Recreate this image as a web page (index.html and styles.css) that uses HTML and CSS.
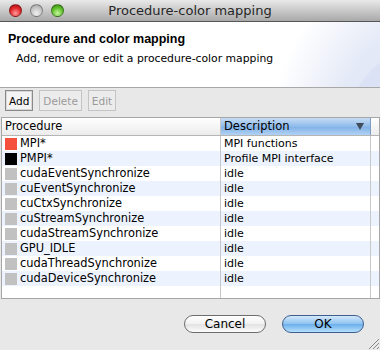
FILE: index.html
```html
<!DOCTYPE html>
<html lang="en">
<head>
  <meta charset="UTF-8">
  <title>Procedure-color mapping</title>
  <link rel="stylesheet" href="styles.css">
</head>
<body>
  <div class="window">
    <header class="titlebar">
      <div class="lights">
        <span class="light red"></span>
        <span class="light gray"></span>
        <span class="light green"></span>
      </div>
      <div class="title">Procedure-color mapping</div>
    </header>

    <section class="banner">
      <h1>Procedure and color mapping</h1>
      <p>Add, remove or edit a procedure-color mapping</p>
    </section>

    <div class="toolbar">
      <button class="tool-btn focus">Add</button>
      <button class="tool-btn" disabled>Delete</button>
      <button class="tool-btn" disabled>Edit</button>
    </div>

    <div class="table">
      <div class="row head">
        <div class="cell proc">Procedure</div>
        <div class="cell desc sorted">Description <span class="arrow"></span></div>
        <div class="cell filler"></div>
      </div>
      <div class="row"><div class="cell proc"><i class="swatch" style="background:#f5503b"></i>MPI*</div><div class="cell desc">MPI functions</div><div class="cell filler"></div></div>
      <div class="row"><div class="cell proc"><i class="swatch" style="background:#000"></i>PMPI*</div><div class="cell desc">Profile MPI interface</div><div class="cell filler"></div></div>
      <div class="row"><div class="cell proc"><i class="swatch"></i>cudaEventSynchronize</div><div class="cell desc">idle</div><div class="cell filler"></div></div>
      <div class="row"><div class="cell proc"><i class="swatch"></i>cuEventSynchronize</div><div class="cell desc">idle</div><div class="cell filler"></div></div>
      <div class="row"><div class="cell proc"><i class="swatch"></i>cuCtxSynchronize</div><div class="cell desc">idle</div><div class="cell filler"></div></div>
      <div class="row"><div class="cell proc"><i class="swatch"></i>cuStreamSynchronize</div><div class="cell desc">idle</div><div class="cell filler"></div></div>
      <div class="row"><div class="cell proc"><i class="swatch"></i>cudaStreamSynchronize</div><div class="cell desc">idle</div><div class="cell filler"></div></div>
      <div class="row"><div class="cell proc"><i class="swatch"></i>GPU_IDLE</div><div class="cell desc">idle</div><div class="cell filler"></div></div>
      <div class="row"><div class="cell proc"><i class="swatch"></i>cudaThreadSynchronize</div><div class="cell desc">idle</div><div class="cell filler"></div></div>
      <div class="row"><div class="cell proc"><i class="swatch"></i>cudaDeviceSynchronize</div><div class="cell desc">idle</div><div class="cell filler"></div></div>
      <div class="row empty"><div class="cell proc"></div><div class="cell desc"></div><div class="cell filler"></div></div>
    </div>

    <footer class="actions">
      <button class="pill">Cancel</button>
      <button class="pill default">OK</button>
      <svg class="grip" width="11" height="11" viewBox="0 0 11 11">
        <path d="M1 11 L11 1 M5 11 L11 5 M9 11 L11 9" stroke="#8a8a8a" stroke-width="1"/>
      </svg>
    </footer>
  </div>
</body>
</html>
```

FILE: styles.css
```css
* {
  margin: 0;
  padding: 0;
  box-sizing: border-box;
}

body {
  font-family: 'DejaVu Sans', 'Liberation Sans', sans-serif;
  font-size: 11px;
  color: #000;
  background: #e8e8e8;
}

.window {
  width: 380px;
  height: 350px;
  display: flex;
  flex-direction: column;
  position: relative;
}

/* Title bar */
.titlebar {
  height: 22px;
  display: flex;
  align-items: center;
  background: linear-gradient(#e9e9e9, #a9a9a9);
  border-bottom: 1px solid #565656;
  position: relative;
}

.lights {
  display: flex;
  gap: 8px;
  padding-left: 9px;
}

.light {
  width: 13px;
  height: 13px;
  border-radius: 50%;
  border: 1px solid rgba(0,0,0,0.35);
}

.light.red { background: radial-gradient(circle at 50% 75%, #ff9a9a, #e0262a 55%, #a30d10); }
.light.gray { background: radial-gradient(circle at 50% 75%, #f0f0f0, #c6c6c6 55%, #9c9c9c); }
.light.green { background: radial-gradient(circle at 50% 75%, #c6f7a0, #5fbf2a 55%, #2f7d10); }

.title {
  position: absolute;
  left: 0;
  right: 0;
  text-align: center;
  font-size: 13px;
  color: #262626;
}

/* Banner */
.banner {
  height: 66px;
  padding: 9px 8px 0;
  background:
    radial-gradient(ellipse 130px 170px at 420px 130px, #dbe2f5 60%, rgba(219,226,245,0) 62%),
    radial-gradient(ellipse 160px 190px at 430px 120px, #e4e9f7 60%, rgba(255,255,255,0) 100%),
    #fff;
  border-bottom: 1px solid #a8a8a8;
}

.banner h1 {
  font-family: 'Liberation Sans', sans-serif;
  font-size: 12.5px;
  font-weight: bold;
  line-height: 16px;
}

.banner p {
  margin-top: 5px;
  padding-left: 8px;
  line-height: 14px;
  font-size: 10.8px;
}

/* Toolbar */
.toolbar {
  display: flex;
  gap: 6px;
  padding: 2px 4px 6px 5px;
}

.tool-btn {
  font-family: inherit;
  font-size: 10.5px;
  height: 21px;
  padding: 0 3px;
  background: #ececec;
  border: 1px solid #c4c4c4;
  color: #9a9a9a;
}

.tool-btn.focus {
  color: #000;
  background: #f4f4f4;
  border: 1px solid #8a8a8a;
  box-shadow: inset 0 0 0 1px #d8d8d8;
}

/* Table */
.table {
  margin-left: 1px;
  height: 182px;
  border: 1px solid #a6a6a6;
  background: #fff;
  display: flex;
  flex-direction: column;
}

.row {
  display: flex;
  height: 15px;
  line-height: 15px;
}

.row:nth-child(odd) {
  background: #edf3fe;
}

.row.empty {
  flex: 1;
  background: #fff;
}

.row.head {
  height: 18px;
  line-height: 17px;
  background: linear-gradient(#fff, #ececec);
  border-bottom: 1px solid #b5b5b5;
  font-size: 11.5px;
}

.cell {
  white-space: nowrap;
  overflow: hidden;
}

.proc {
  width: 219px;
  padding-left: 3px;
  display: flex;
  align-items: center;
  border-right: 1px solid #c8c8c8;
  font-size: 11.4px;
}

.desc {
  width: 150px;
  padding-left: 3px;
  border-right: 1px solid #c8c8c8;
}

.filler {
  flex: 1;
}

.head .sorted {
  background: linear-gradient(#c6dcf5, #8fbbea 50%, #7fb0e6 51%, #b1d2f4);
  display: flex;
  align-items: center;
  justify-content: space-between;
  padding-right: 6px;
  border-right: 1px solid #7f9ec4;
}

.arrow {
  width: 0;
  height: 0;
  border-left: 4px solid transparent;
  border-right: 4px solid transparent;
  border-top: 7px solid #3f4c5a;
}

.swatch {
  width: 12px;
  height: 12px;
  margin-right: 3px;
  background: #c1c1c1;
  flex-shrink: 0;
}

/* Bottom buttons */
.actions {
  flex: 1;
  display: flex;
  justify-content: flex-end;
  align-items: flex-start;
  gap: 16px;
  padding: 16px 16px 0 0;
  position: relative;
}

.pill {
  font-family: inherit;
  font-size: 12px;
  width: 82px;
  height: 18px;
  border-radius: 9px;
  border: 1px solid #6d6d6d;
  background: linear-gradient(#fff, #f1f1f1 50%, #e2e2e2 51%, #fcfcfc);
  color: #000;
}

.pill.default {
  border-color: #3f5f8f;
  background: linear-gradient(#d4e8fb, #8cc2f0 50%, #6aaeea 51%, #b6e0fd);
}

.grip {
  position: absolute;
  right: 1px;
  bottom: 1px;
}
```
